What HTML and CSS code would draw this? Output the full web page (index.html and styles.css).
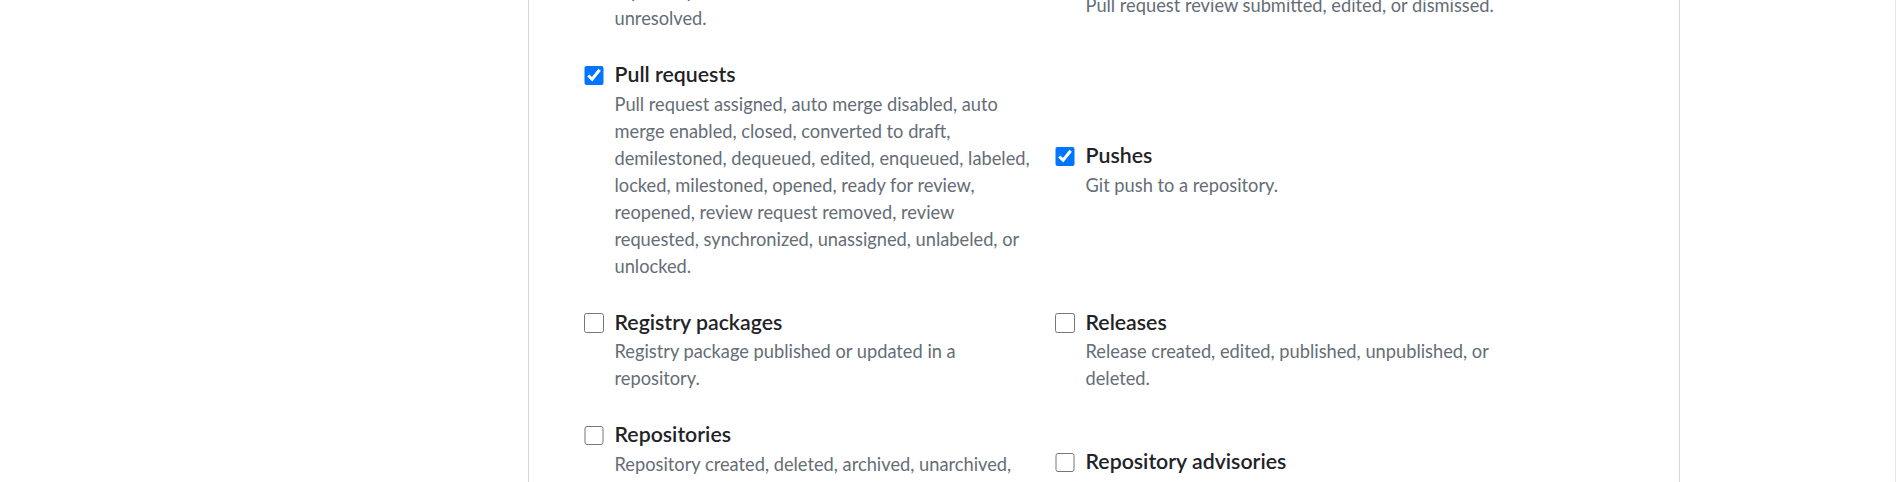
FILE: index.html
```html
<!DOCTYPE html>
<html lang="en">
<head>
<meta charset="utf-8">
<title>Webhook events</title>
<link rel="stylesheet" href="styles.css">
</head>
<body>
<div class="page">
  <div class="box">
    <div class="events">
      <label class="event">
        <input type="checkbox" class="check">
        <span class="event-text">
          <span class="event-title">Pull request review threads</span>
          <span class="event-desc">A pull request review thread was marked as resolved or<br>unresolved.</span>
        </span>
      </label>
      <label class="event">
        <input type="checkbox" class="check">
        <span class="event-text">
          <span class="event-title">Pull request reviews</span>
          <span class="event-desc">Pull request review submitted, edited, or dismissed.</span>
        </span>
      </label>

      <label class="event">
        <input type="checkbox" class="check" checked>
        <span class="event-text">
          <span class="event-title">Pull requests</span>
          <span class="event-desc">Pull request assigned, auto merge disabled, auto<br>merge enabled, closed, converted to draft,<br>demilestoned, dequeued, edited, enqueued, labeled,<br>locked, milestoned, opened, ready for review,<br>reopened, review request removed, review<br>requested, synchronized, unassigned, unlabeled, or<br>unlocked.</span>
        </span>
      </label>
      <label class="event">
        <input type="checkbox" class="check" checked>
        <span class="event-text">
          <span class="event-title">Pushes</span>
          <span class="event-desc">Git push to a repository.</span>
        </span>
      </label>

      <label class="event">
        <input type="checkbox" class="check">
        <span class="event-text">
          <span class="event-title">Registry packages</span>
          <span class="event-desc">Registry package published or updated in a<br>repository.</span>
        </span>
      </label>
      <label class="event">
        <input type="checkbox" class="check">
        <span class="event-text">
          <span class="event-title">Releases</span>
          <span class="event-desc">Release created, edited, published, unpublished, or<br>deleted.</span>
        </span>
      </label>

      <label class="event">
        <input type="checkbox" class="check">
        <span class="event-text">
          <span class="event-title">Repositories</span>
          <span class="event-desc">Repository created, deleted, archived, unarchived,<br>publicized, privatized, edited, renamed, or<br>transferred.</span>
        </span>
      </label>
      <label class="event">
        <input type="checkbox" class="check">
        <span class="event-text">
          <span class="event-title">Repository advisories</span>
          <span class="event-desc">Repository advisory published or reported.</span>
        </span>
      </label>
    </div>
  </div>
</div>
</body>
</html>
```
FILE: styles.css
```css
html, body {
  margin: 0;
  padding: 0;
  background: #ffffff;
  overflow: hidden;
}

body {
  font-family: Lato, "Liberation Sans", sans-serif;
  color: #1f2328;
}

.page {
  box-sizing: border-box;
  width: 1896px;
  height: 482px;
  overflow: hidden;
  padding-left: 528px;
  border-right: 1px solid #e6e6e6;
}

.box {
  box-sizing: border-box;
  width: 1152px;
  min-height: 700px;
  margin-top: -53.5px;
  border-left: 1px solid #d0d7de;
  border-right: 1px solid #d0d7de;
  background: #ffffff;
}

.events {
  display: grid;
  grid-template-columns: 471px 471px;
  row-gap: 27px;
  align-items: center;
  padding-left: 55px;
}

.event {
  display: flex;
  align-items: flex-start;
  gap: 11px;
  cursor: pointer;
}

.check {
  flex: none;
  width: 19.5px;
  height: 19.5px;
  margin: 6.5px 0 0 0;
  accent-color: #0075ff;
}

.event-text {
  display: flex;
  flex-direction: column;
  width: 430px;
  white-space: nowrap;
}

.event-title {
  font-size: 21.3px;
  font-weight: 600;
  line-height: 31.5px;
  color: #1f2328;
}

.event-desc {
  font-size: 18.25px;
  line-height: 27px;
  color: #656d76;
}
```
